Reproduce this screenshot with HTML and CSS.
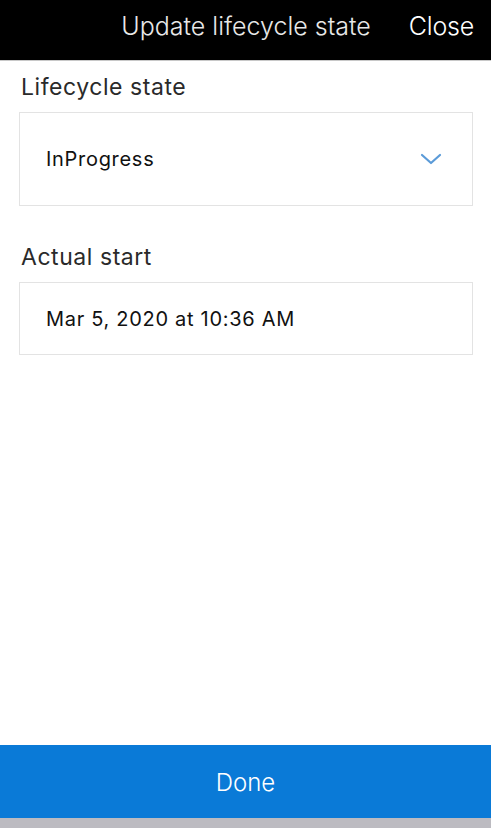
FILE: index.html
```html
<!DOCTYPE html>
<html>
<head>
<meta charset="utf-8">
<link rel="stylesheet" href="styles.css">
</head>
<body>
<div class="app">
  <header class="topbar">
    <div class="title">Update lifecycle state</div>
    <div class="close">Close</div>
  </header>
  <main class="content">
    <div class="field">
      <div class="label">Lifecycle state</div>
      <div class="box select">
        <span class="value">InProgress</span>
        <svg class="chev" width="22" height="14" viewBox="0 0 22 14"><path d="M2 3 L11 11 L20 3" fill="none" stroke="#5b9bd8" stroke-width="2.2" stroke-linecap="round" stroke-linejoin="round"/></svg>
      </div>
    </div>
    <div class="field">
      <div class="label">Actual start</div>
      <div class="box date">
        <span class="value">Mar 5, 2020 at 10:36 AM</span>
      </div>
    </div>
  </main>
  <footer class="done">Done</footer>
  <div class="bottomstrip"></div>
</div>
</body>
</html>
```

FILE: styles.css
```css
* { box-sizing: border-box; }
html, body { margin: 0; padding: 0; }
body {
  width: 491px;
  height: 828px;
  font-family: Inter, "Noto Sans", sans-serif;
  background: #fff;
  overflow: hidden;
}
.app {
  display: flex;
  flex-direction: column;
  height: 828px;
}
.topbar {
  height: 61px;
  background: #000;
  border-bottom: 1px solid #c8c8c8;
  display: flex;
  align-items: center;
  justify-content: flex-end;
  padding-right: 17px;
  padding-bottom: 8px;
  color: #fff;
}
.title {
  font-size: 25px;
  font-weight: 300;
  color: #e8e8e8;
  margin-right: 38px;
}
.close {
  font-size: 25px;
  font-weight: 300;
  letter-spacing: -0.2px;
}
.content {
  flex: 1;
  padding: 12px 18px 0 19px;
  display: flex;
  flex-direction: column;
  gap: 37px;
}
.field { display: flex; flex-direction: column; }
.label {
  font-size: 23px;
  color: #2a2a2a;
  padding-left: 2px;
  height: 28px;
  line-height: 28px;
  margin-bottom: 11px;
  letter-spacing: 0.55px;
}
.box {
  border: 1px solid #e3e3e3;
  display: flex;
  align-items: center;
  padding-left: 26px;
  padding-right: 30px;
}
.select { height: 94px; justify-content: space-between; }
.date { height: 73px; }
.value {
  font-size: 20px;
  color: #111;
  letter-spacing: 0.7px;
}
.done {
  height: 73px;
  background: #0a7ad7;
  color: #fff;
  display: flex;
  align-items: center;
  justify-content: center;
  font-size: 24px;
  font-weight: 300;
  padding-top: 2px;
}
.bottomstrip {
  height: 10px;
  background: #bcbbc1;
}
```
